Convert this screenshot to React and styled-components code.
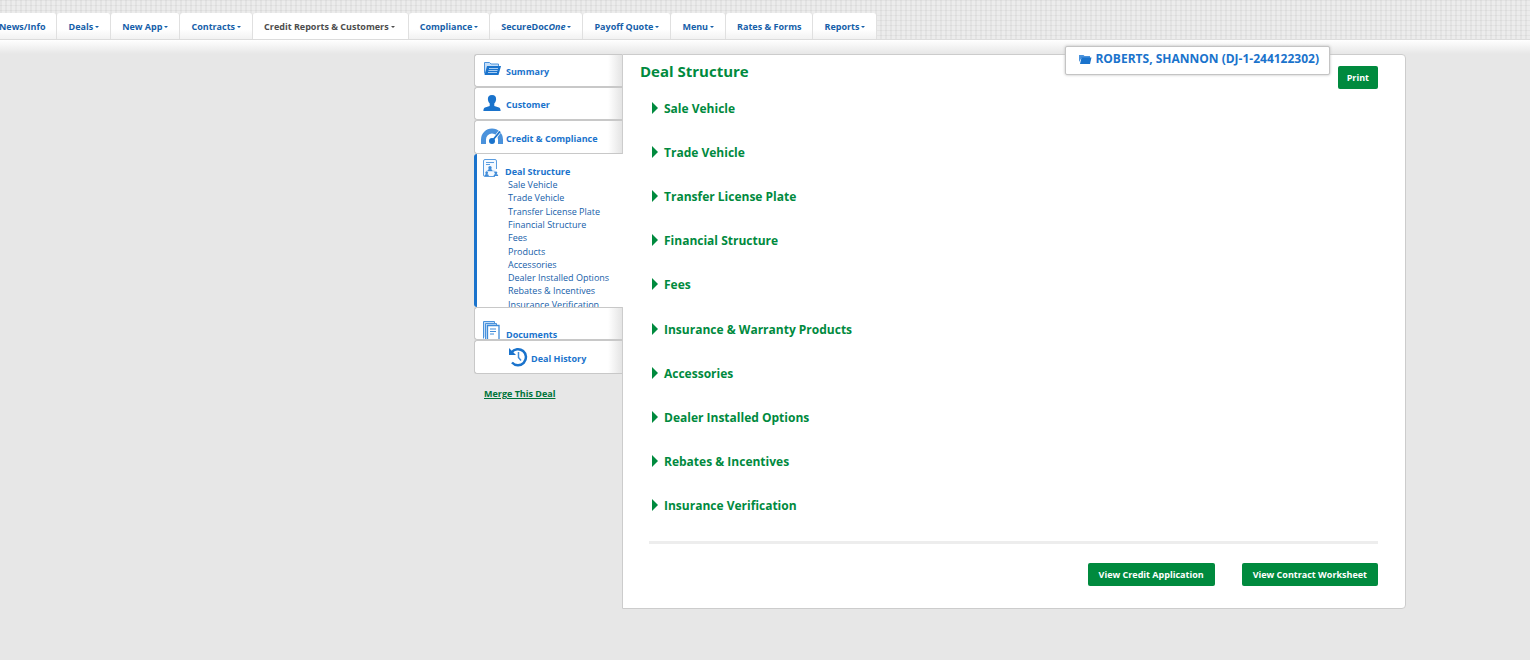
import React from "react";
import styled, { createGlobalStyle, css } from "styled-components";

const Global = createGlobalStyle`
  * { box-sizing: border-box; }
  body { margin: 0; background: #e7e7e7; font-family: "Open Sans", "Noto Sans", sans-serif; overflow-x: hidden; }
  ul { list-style: none; margin: 0; padding: 0; }
  a { text-decoration: none; }
`;

const Header = styled.header`
  padding-top: 13px;
  overflow: hidden;
  border-bottom: 1px solid #dcdcdc;
  background-color: #ececec;
  background-image:
    repeating-linear-gradient(#0000000a 0 1px, transparent 1px 5px),
    repeating-linear-gradient(90deg, #0000000a 0 2px, transparent 2px 5px);
`;

const Tabs = styled.nav`
  display: flex;
  margin-left: -12px;
  margin-bottom: -1px;
`;

const Tab = styled.a`
  display: flex;
  align-items: center;
  height: 27px;
  padding: 0 11px 0 11px;
  border-right: 1px solid #e0e0e0;
  border-radius: 3px 3px 0 0;
  background: linear-gradient(#fff 60%, #f1f1f1);
  color: #1660a9;
  font-size: 9px;
  font-weight: 700;
  white-space: nowrap;
  ${(p) => p.$active && css`
    padding-right: 13px;
    background: #fff;
    color: #4d4d4d;
  `}
`;

const Caret = styled.span`
  width: 0;
  margin: 1px 0 0 2px;
  border: 2px solid transparent;
  border-top-color: currentColor;
  border-bottom: 0;
`;

const Shade = styled.div`
  height: 14px;
  background: linear-gradient(#fff, #e7e7e7);
`;

const Page = styled.main`
  display: flex;
  align-items: flex-start;
  margin: 0 124px 51px 474px;
`;

const Side = styled.nav`
  width: 148px;
  flex: none;
`;

const SideItem = styled.a`
  display: flex;
  align-items: ${(p) => (p.$clipped ? "flex-start" : "center")};
  gap: 3px;
  height: ${(p) => (p.$tall ? 34 : 33)}px;
  padding: ${(p) => (p.$clipped ? 13 : 0)}px 0 0 ${(p) => p.$indent || 6}px;
  overflow: hidden;
  border: 1px solid #c8c8c8;
  border-right: 0;
  border-radius: 3px 0 0 3px;
  background: linear-gradient(to left, #e4e4e4, #fff 14px);
  color: #1a73cc;
  font-size: 9px;
  font-weight: 700;
  line-height: 13px;

  svg { flex: none; }
`;

const Label = styled.span`
  padding-top: ${(p) => (p.$low ? 7 : 2)}px;
`;

const OpenItem = styled.div`
  height: 153px;
  padding-top: 5px;
  overflow: hidden;
  border-left: 3px solid #1a73cc;
  border-radius: 3px 0 0 3px;
  margin-right: -1px;
  position: relative;
  z-index: 1;
  background: #fff;
`;

const OpenTitle = styled.a`
  display: flex;
  align-items: flex-end;
  gap: 6px;
  height: 19px;
  padding-left: 6px;
  color: #1a73cc;
  font-size: 9px;
  font-weight: 700;
  line-height: 13px;
`;

const SubList = styled.ul`
  display: grid;
  grid-auto-rows: 1fr;
  height: 133px;
  padding-left: 31px;
`;

const SubLink = styled.a`
  display: block;
  color: #1660a9;
  font-size: 9px;
  line-height: 13px;
  white-space: nowrap;
`;

const Merge = styled.a`
  display: inline-block;
  margin: 13px 0 0 10px;
  color: #00743a;
  font-size: 9px;
  font-weight: 700;
  line-height: 13px;
  text-decoration: underline;
`;

const Panel = styled.section`
  position: relative;
  flex: 1;
  padding: 11px 27px 22px 17px;
  border: 1px solid #ccc;
  border-radius: 0 4px 4px 0;
  background: #fff;
`;

const PanelHead = styled.div`
  display: flex;
  justify-content: space-between;
  align-items: flex-start;
  height: 20px;
`;

const Title = styled.h1`
  margin: 0;
  color: #008a3e;
  font-size: 15px;
  font-weight: 700;
  line-height: 11px;
`;

const Button = styled.button`
  height: 23px;
  padding: 0 ${(p) => (p.$wide ? 11 : 9)}px;
  border: 0;
  border-radius: 2px;
  background: #008a3e;
  color: #fff;
  font-family: inherit;
  font-size: 9px;
  font-weight: 700;
`;

const Customer = styled.a`
  position: absolute;
  top: -9px;
  right: 75px;
  display: flex;
  align-items: center;
  gap: 3px;
  height: 29px;
  padding: 0 10px 4px 12px;
  border: 1px solid #c4c4c4;
  border-radius: 2px;
  background: #fff;
  box-shadow: 0 0 3px #bbb;
  color: #1a73cc;
  font-size: 12px;
  font-weight: 700;
  white-space: nowrap;
`;

const Sections = styled.ul`
  display: grid;
  grid-auto-rows: 1fr;
  height: 442px;
  padding-left: 12px;
`;

const SectionButton = styled.button`
  display: flex;
  align-items: center;
  gap: 6px;
  height: 44px;
  padding: 0;
  border: 0;
  background: none;
  color: #008a3e;
  font-family: inherit;
  font-size: 12px;
  font-weight: 700;
`;

const Arrow = styled.span`
  margin-bottom: 1px;
  border: 6px solid transparent;
  border-left-color: currentColor;
  border-right: 0;
`;

const Footer = styled.footer`
  display: flex;
  justify-content: flex-end;
  gap: 27px;
  margin: 13px 0 0 9px;
  padding-top: 19px;
  border-top: 3px solid #ededed;
`;

const FolderIcon = () => (
  <svg width="22" height="20" viewBox="0 0 22 20" aria-hidden="true">
    <path d="M3.500 12.500V1.500h5L10 3h7.500v2" fill="#c5def7" stroke="#4a92dc" />
    <path d="M6 5H20L17.500 14H3.500Z" fill="#1a73cc" />
    <path d="M8 7.500h9M7.500 9.500h9M7 11.500h9" stroke="#a9cdf2" />
  </svg>
);

const PersonIcon = () => (
  <svg width="22" height="20" viewBox="0 0 22 20" aria-hidden="true">
    <path d="M11 1c3 0 4.400 2 4.100 4.600-.2 2-1 3.200-1.800 4V12l4.700 1.400c1.300.5 1.600 2 1.600 3.600H2.400c0-1.600.3-3.100 1.600-3.600L8.700 12V9.600c-.8-.8-1.600-2-1.800-4C6.600 3 8 1 11 1Z" fill="#1a73cc" />
  </svg>
);

const GaugeIcon = () => (
  <svg width="22" height="18" viewBox="0 0 22 18" aria-hidden="true">
    <path d="M2.500 16V11.500A8.500 8.500 0 0 1 19.500 11.500V16" fill="none" stroke="#4a92dc" strokeWidth="5" />
    <path d="M11.500 13L18.500 4" stroke="#fff" strokeWidth="3" />
    <circle cx="11" cy="13" r="3" fill="#1a73cc" />
    <path d="M11 13L19 3.500" stroke="#1a73cc" strokeWidth="1.800" />
  </svg>
);

const DealIcon = () => (
  <svg width="16" height="19" viewBox="0 0 16 19" aria-hidden="true">
    <path d="M13.500 10V2Q13.500.5 12 .5H2Q.5.5.5 2V16Q.5 17.500 2 17.500H12" fill="#f4f9ff" stroke="#5b9de0" />
    <path d="M3 3.500h8M3 5.500h4" stroke="#5b9de0" />
    <path d="M7 10v2M3.500 14v-2h8v2" stroke="#a9cdf2" fill="none" />
    <g fill="#3f8bd8">
      <circle cx="7" cy="8.700" r="1.700" />
      <path d="M4.500 12a2.500 2 0 0 1 5 0ZM1.500 17a2.200 2 0 0 1 4.400 0ZM10.500 17a2.400 2 0 0 1 4.800 0Z" />
      <circle cx="3.700" cy="13.800" r="1.400" />
      <circle cx="12.900" cy="13.800" r="1.400" />
    </g>
  </svg>
);

const DocsIcon = () => (
  <svg width="22" height="22" viewBox="0 0 22 22" aria-hidden="true">
    <path d="M2.500 17.500V.5H13.500V2M4.500 19.500V2.500H15.500V4" fill="#c5def7" stroke="#4a92dc" />
    <path d="M6.500 22V4.500h11.500V22" fill="#fff" stroke="#3f8bd8" strokeWidth="1.300" />
    <path d="M9 8h6M9 10.500h6M9 13h4" stroke="#3f8bd8" />
  </svg>
);

const HistoryIcon = () => (
  <svg width="20" height="20" viewBox="0 0 20 20" aria-hidden="true">
    <path d="M3.500 5.500A8 8 0 1 1 4 15.500" fill="none" stroke="#1a73cc" strokeWidth="2.500" />
    <path d="M1 1V8H8Z" fill="#1a73cc" />
    <path d="M10.500 5v5.500l2.500 3" fill="none" stroke="#3f8bd8" strokeWidth="1.500" />
  </svg>
);

const OpenFolderIcon = () => (
  <svg width="14" height="12" viewBox="0 0 14 12" aria-hidden="true">
    <path d="M1 9V2h4.500l1 1H12v2H3.500Z" fill="#4a92dc" />
    <path d="M3.500 4.500H13.500L12 11H2Z" fill="#1a73cc" />
  </svg>
);

const tabs = [
  ["News/Info", false],
  ["Deals", true],
  ["New App", true],
  ["Contracts", true],
  ["Credit Reports & Customers", true],
  ["Compliance", true],
  [<>SecureDoc<em>One</em></>, true],
  ["Payoff Quote", true],
  ["Menu", true],
  ["Rates & Forms", false],
  ["Reports", true],
];

const subLinks = [
  "Sale Vehicle", "Trade Vehicle", "Transfer License Plate", "Financial Structure", "Fees",
  "Products", "Accessories", "Dealer Installed Options", "Rebates & Incentives", "Insurance Verification",
];

const sections = [
  "Sale Vehicle", "Trade Vehicle", "Transfer License Plate", "Financial Structure", "Fees",
  "Insurance & Warranty Products", "Accessories", "Dealer Installed Options", "Rebates & Incentives",
  "Insurance Verification",
];

export default function App() {
  return (
    <>
      <Global />
      <Header>
        <Tabs>
          {tabs.map(([label, menu], i) => (
            <Tab key={i} href="#" $active={i === 4}>
              <span>{label}</span>
              {menu && <Caret />}
            </Tab>
          ))}
        </Tabs>
      </Header>
      <Shade />
      <Page>
        <Side>
          <SideItem href="#"><FolderIcon /><Label>Summary</Label></SideItem>
          <SideItem href="#"><PersonIcon /><Label>Customer</Label></SideItem>
          <SideItem href="#" $tall><GaugeIcon /><Label>Credit &amp; Compliance</Label></SideItem>
          <OpenItem>
            <OpenTitle href="#"><DealIcon />Deal Structure</OpenTitle>
            <SubList>
              {subLinks.map((s) => <li key={s}><SubLink href="#">{s}</SubLink></li>)}
            </SubList>
          </OpenItem>
          <SideItem href="#" $clipped><DocsIcon /><Label $low>Documents</Label></SideItem>
          <SideItem href="#" $tall $indent={33}><HistoryIcon /><Label>Deal History</Label></SideItem>
          <Merge href="#">Merge This Deal</Merge>
        </Side>
        <Panel>
          <Customer href="#"><OpenFolderIcon />ROBERTS, SHANNON (DJ-1-244122302)</Customer>
          <PanelHead>
            <Title>Deal Structure</Title>
            <Button type="button">Print</Button>
          </PanelHead>
          <Sections>
            {sections.map((s) => (
              <li key={s}><SectionButton type="button"><Arrow />{s}</SectionButton></li>
            ))}
          </Sections>
          <Footer>
            <Button type="button" $wide>View Credit Application</Button>
            <Button type="button" $wide>View Contract Worksheet</Button>
          </Footer>
        </Panel>
      </Page>
    </>
  );
}
